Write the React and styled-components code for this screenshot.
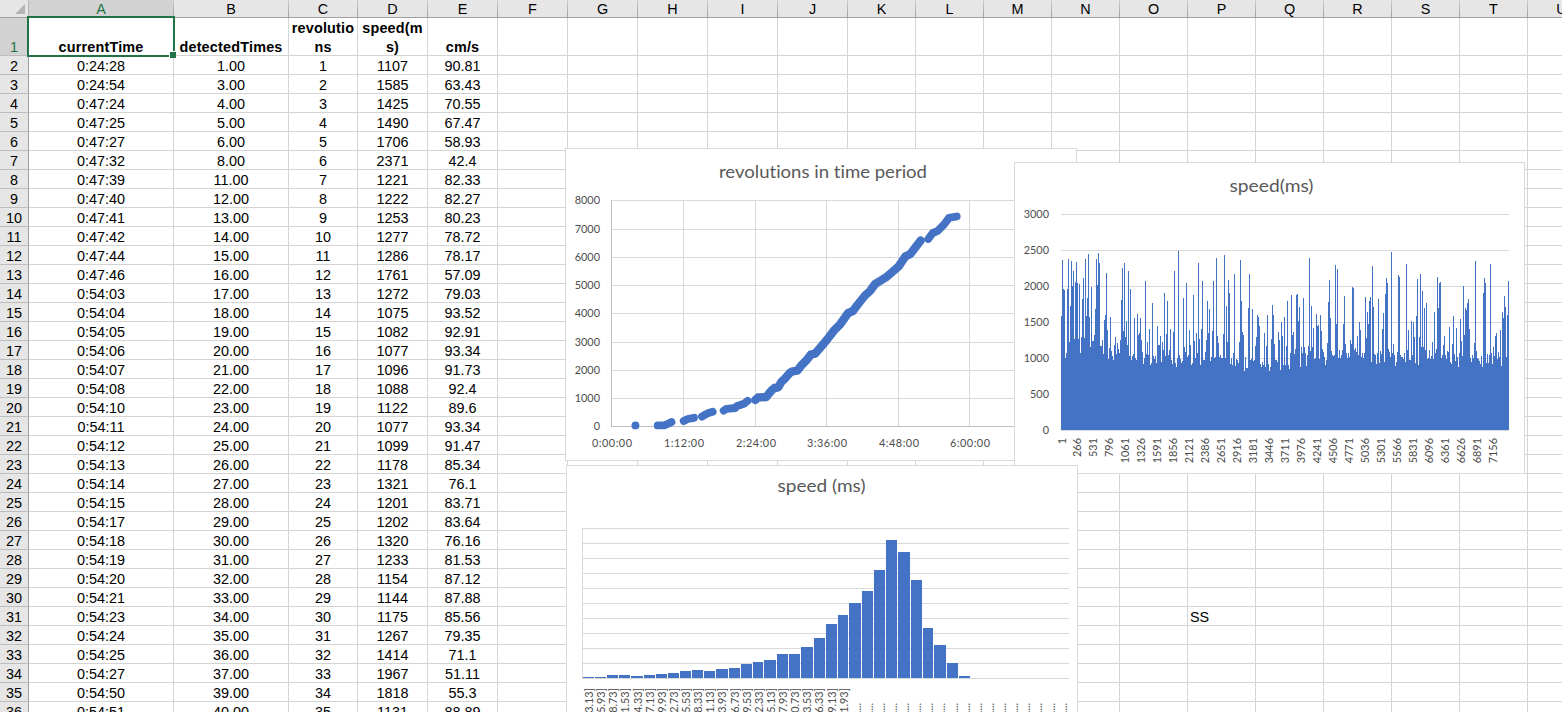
import React from "react";
import styled, { createGlobalStyle } from "styled-components";

const GlobalStyle = createGlobalStyle`
  html, body { margin: 0; padding: 0; overflow: hidden; background: #fff; }
  * { box-sizing: border-box; }
`;

const BLUE = "#4472c4";
const GRID = "#d4d4d4";
const CHART_GRID = "#d9d9d9";
const GREEN = "#217346";

const Sheet = styled.main`
  position: relative;
  width: 1562px;
  height: 712px;
  overflow: hidden;
  background: #fff;
  color: #000;
  font-family: "Liberation Sans", Arial, sans-serif;
  font-size: 14.4px;
`;

const Row = styled.div`
  display: flex;
  width: max-content;
  height: ${(p) => p.$height}px;
`;

const Corner = styled.div`
  display: flex;
  flex: none;
  align-items: flex-end;
  justify-content: flex-end;
  width: 29px;
  padding: 0 3px 3px 0;
  background: #e6e6e6;
  border-right: 1px solid #b4b4b4;
  border-bottom: 1px solid #9f9f9f;
`;

const ColumnHeader = styled.div`
  flex: none;
  width: ${(p) => p.$width}px;
  padding-top: 1px;
  line-height: 17px;
  text-align: center;
  color: ${(p) => (p.$active ? GREEN : "#000")};
  background: ${(p) => (p.$active ? "#d2d2d2" : "#e6e6e6")};
  border-right: 1px solid;
  border-image: linear-gradient(#cfcfcf, #9a9a9a) 1;
  box-shadow: inset 0 -1px #9f9f9f;
`;

const RowHeader = styled.div`
  display: flex;
  flex: none;
  align-items: flex-end;
  justify-content: center;
  width: 29px;
  line-height: 15px;
  color: ${(p) => (p.$active ? GREEN : "#000")};
  background: ${(p) => (p.$active ? "#d2d2d2" : "#e6e6e6")};
  border-right: 1px solid #9f9f9f;
  border-bottom: 1px solid #bdbdbd;
`;

const Cell = styled.div`
  display: flex;
  flex: none;
  align-items: flex-end;
  justify-content: ${(p) => (p.$left ? "flex-start" : "center")};
  width: ${(p) => p.$width}px;
  padding-left: ${(p) => (p.$left ? 2 : 0)}px;
  border-right: 1px solid ${GRID};
  border-bottom: 1px solid ${GRID};
`;

const CellText = styled.span`
  margin-bottom: ${(p) => (p.$bold ? -2 : 0)}px;
  text-align: center;
  white-space: pre;
  font-weight: ${(p) => (p.$bold ? 700 : 400)};
  letter-spacing: ${(p) => (p.$bold ? 0.2 : 0)}px;
  line-height: ${(p) => (p.$bold ? 19 : 15)}px;
`;

const Selection = styled.div`
  position: absolute;
  left: 27px;
  top: 16px;
  width: 148px;
  height: 41px;
  border: 2px solid ${GREEN};

  &::after {
    content: "";
    position: absolute;
    right: -3px;
    bottom: -3px;
    width: 6px;
    height: 6px;
    background: ${GREEN};
    border: 1px solid #fff;
    border-right: 0;
    border-bottom: 0;
  }
`;

const ChartWindow = styled.section`
  position: absolute;
  left: ${(p) => p.$x}px;
  top: ${(p) => p.$y}px;
  width: ${(p) => p.$w}px;
  height: ${(p) => p.$h}px;
  overflow: hidden;
  background: #fff;
  border: 1px solid ${CHART_GRID};
`;

const ChartSvg = styled.svg`
  display: block;
  font-family: Lato, Carlito, sans-serif;
  font-variant-ligatures: none;
  fill: #595959;
`;

const ChartTitle = styled.text`
  font-size: 18px;
  text-anchor: middle;
`;

const AxisLabel = styled.text`
  font-size: 10.9px;
  fill: #4c4c4c;
  text-anchor: ${(p) => p.$anchor || "end"};
`;

const COLUMNS = [
  ["A", 145], ["B", 115], ["C", 69], ["D", 70], ["E", 70], ["F", 70], ["G", 70],
  ["H", 70], ["I", 70], ["J", 70], ["K", 68], ["L", 68], ["M", 68], ["N", 68],
  ["O", 68], ["P", 68], ["Q", 68], ["R", 68], ["S", 68], ["T", 68], ["U", 68],
];

const HEADINGS = ["currentTime", "detectedTimes", "revolutio\nns", "speed(m\ns)", "cm/s"];

const RECORDS = `0:24:28 1.00 1107 90.81
0:24:54 3.00 1585 63.43
0:47:24 4.00 1425 70.55
0:47:25 5.00 1490 67.47
0:47:27 6.00 1706 58.93
0:47:32 8.00 2371 42.4
0:47:39 11.00 1221 82.33
0:47:40 12.00 1222 82.27
0:47:41 13.00 1253 80.23
0:47:42 14.00 1277 78.72
0:47:44 15.00 1286 78.17
0:47:46 16.00 1761 57.09
0:54:03 17.00 1272 79.03
0:54:04 18.00 1075 93.52
0:54:05 19.00 1082 92.91
0:54:06 20.00 1077 93.34
0:54:07 21.00 1096 91.73
0:54:08 22.00 1088 92.4
0:54:10 23.00 1122 89.6
0:54:11 24.00 1077 93.34
0:54:12 25.00 1099 91.47
0:54:13 26.00 1178 85.34
0:54:14 27.00 1321 76.1
0:54:15 28.00 1201 83.71
0:54:17 29.00 1202 83.64
0:54:18 30.00 1320 76.16
0:54:19 31.00 1233 81.53
0:54:20 32.00 1154 87.12
0:54:21 33.00 1144 87.88
0:54:23 34.00 1175 85.56
0:54:24 35.00 1267 79.35
0:54:25 36.00 1414 71.1
0:54:27 37.00 1967 51.11
0:54:50 39.00 1818 55.3
0:54:51 40.00 1131 88.89`
  .split("\n")
  .map((line, i) => {
    const [time, detected, speed, cms] = line.split(" ");
    return [time, detected, String(i + 1), speed, cms];
  });

// Runs of markers in the scatter chart, in sheet coordinates.
const SCATTER_RUNS = [
  "635.4,425.4 635.5,425.4",
  "657.7,425.4 664.3,425.4 667.5,424 671.5,422",
  "683.7,421 687.7,419 694,417.8",
  "702,416.6 704.5,415 708.5,413 712.7,411.7",
  "723.7,410.7 726.3,408.8 735.3,408 737,406 744,403.7 747.7,400.8",
  "755.3,400 758,397.5 766.3,397 769,393.5 772,390 774.5,388 778.3,387.3 781.3,382 784.7,378.7 790,372.7 792.7,371.3 797.3,370.7 802,364.7 806.7,360 810.7,354.7 815,353.7 820,348 826.7,340 834.7,329.7 840,324.5 848,313.2 852.7,311.2 857,305.5 865,295.5 870,291 875.3,283.8 880,281 886,277.3 898.7,266.3 905.3,256.5 910.3,254 920.7,240.5",
  "928.3,239 932.7,233 937.3,231.2 944,224.5 949,217.8 956.7,216.5",
];

// Depth of every column's top below the sheet's y = 240, in thirds of a pixel.
const SPEED_TOPS = [
  228,60,147,150,354,339,147,57,306,198,63,138,93,297,126,66,129,297,132,339,291,177,114,294,57,228,174,42,231,321,
  141,303,303,285,207,57,135,39,69,318,318,300,342,240,225,99,270,357,324,231,333,348,360,315,291,342,309,327,339,300,
  180,84,273,69,291,243,315,93,348,147,360,348,342,234,354,360,222,285,279,234,300,336,372,354,123,342,306,345,267,375,
  369,189,348,357,348,369,258,315,315,288,366,306,330,159,348,282,183,345,330,267,360,372,276,93,369,381,354,33,345,357,
  369,363,174,321,336,129,351,345,270,315,375,369,165,303,354,279,339,69,297,375,267,123,360,360,336,300,183,279,207,
  363,351,273,123,354,351,54,288,309,351,345,354,354,282,45,354,198,306,120,159,372,354,375,339,102,378,357,360,369,306,
  60,183,276,285,393,351,384,384,204,102,360,357,207,363,360,318,291,225,231,258,372,381,366,375,279,381,318,225,372,393,
  381,297,195,225,312,360,360,366,276,300,390,246,288,375,231,375,318,183,375,387,339,165,285,276,342,327,165,162,243,201,
  381,321,339,174,321,339,378,345,318,54,333,198,321,264,357,354,222,258,255,357,225,273,327,336,351,375,360,309,186,120,
  234,333,345,348,345,75,252,87,354,330,354,345,330,252,168,312,339,354,339,351,300,312,141,144,330,324,336,288,345,246,
  270,351,339,354,339,171,294,216,252,183,171,366,78,201,342,345,372,339,177,369,333,342,267,219,366,162,114,129,327,336,
  351,36,339,312,345,378,366,336,105,111,345,351,351,357,339,366,72,330,270,360,360,243,345,246,291,369,228,117,375,291,
  102,321,153,321,204,330,189,357,354,330,357,348,306,357,216,339,327,111,204,129,126,354,345,315,288,345,357,333,336,261,
  366,372,312,228,342,363,264,351,381,339,237,303,348,138,285,204,210,189,177,267,354,366,345,354,309,63,333,354,357,363,
  372,348,381,159,114,129,369,342,369,345,72,339,372,321,348,288,279,357,336,351,270,378,216,234,168,201,351,225,123,
];

// [left, width, height] of each histogram bin.
const BINS = [
  [583,11,1],[595,11,1],[607,11,3],[619,11,3],[631,12,2],[644,11,3],[656,11,4],[668,11,5],
  [680,11,7],[692,11,8],[704,11,7],[716,12,9],[729,11,10],[741,11,14],[753,10,16],[764,12,18],
  [777,11,24],[789,11,24],[801,12,31],[814,11,40],[826,11,54],[838,10,63],[849,12,75],[862,11,87],
  [874,11,108],[886,11,138],[898,12,126],[911,11,98],[923,10,50],[934,12,33],[947,11,15],[959,11,2],
];

const BIN_LABELS = [
  "3.13]", "5.93]", "8.73]", "1.53]", "4.33]", "7.13]", "9.93]", "2.73]", "5.53]", "8.33]", "1.13]",
  "3.93]", "6.73]", "9.53]", "2.33]", "5.13]", "7.93]", "0.73]", "3.53]", "6.33]", "9.13]", "1.93]",
];

const range = (n) => Array.from({ length: n }, (_, i) => i);

// A floating chart whose drawing uses the coordinates of the sheet.
function Chart({ x, y, w, h, children }) {
  return (
    <ChartWindow $x={x} $y={y} $w={w} $h={h}>
      <ChartSvg width={w - 2} height={h - 2} viewBox={`${x + 1} ${y + 1} ${w - 2} ${h - 2}`}>
        {children}
      </ChartSvg>
    </ChartWindow>
  );
}

function HLines({ ys, x1, x2, color = CHART_GRID }) {
  return ys.map((y) => <rect key={y} x={x1} y={y} width={x2 - x1} height="1" fill={color} />);
}

function RevolutionsChart() {
  const ys = [200, 229, 257, 285, 313, 342, 370, 398];
  const xs = [611, 683, 755, 826, 898, 969];
  const times = ["0:00:00", "1:12:00", "2:24:00", "3:36:00", "4:48:00", "6:00:00"];
  return (
    <Chart x={565} y={148} w={512} h={313}>
      <ChartTitle x="823" y="178" textLength="208" lengthAdjust="spacingAndGlyphs">revolutions in time period</ChartTitle>
      <HLines ys={ys} x1={611} x2={1041} />
      {xs.slice(1).map((x) => <rect key={x} x={x} y="200" width="1" height="226" fill={CHART_GRID} />)}
      <rect x="611" y="200" width="1" height="227" fill="#bfbfbf" />
      <HLines ys={[426]} x1={611} x2={1041} color="#bfbfbf" />
      {[...ys, 426].map((y, i) => (
        <AxisLabel key={y} x="600" y={y + 4}>{8000 - i * 1000}</AxisLabel>
      ))}
      {times.map((t, i) => (
        <AxisLabel key={t} $anchor="middle" x={xs[i] + 1} y="447" textLength="40">{t}</AxisLabel>
      ))}
      {SCATTER_RUNS.map((points, i) => (
        <polyline key={points} points={points} fill="none" stroke={BLUE} strokeWidth={i === 5 ? 8.4 : 7.8}
          strokeLinecap="round" strokeLinejoin="round" />
      ))}
    </Chart>
  );
}

function SpeedChart() {
  const ys = range(7).map((i) => 214 + i * 36);
  const columns = SPEED_TOPS.map((t, i) => `M${1061 + i} 430V${240 + t / 3}h1V430z`).join("");
  return (
    <Chart x={1014} y={162} w={511} h={312}>
      <ChartTitle x="1271.5" y="192" textLength="84" lengthAdjust="spacingAndGlyphs">speed(ms)</ChartTitle>
      <HLines ys={ys} x1={1061} x2={1509} />
      <path d={columns} fill={BLUE} shapeRendering="crispEdges" />
      {ys.map((y, i) => (
        <AxisLabel key={y} x="1049" y={y + 4}>{3000 - i * 500}</AxisLabel>
      ))}
      {range(28).map((i) => (
        <AxisLabel key={i} transform={`translate(${1065.5 + i * 15.97} 438) rotate(-90)`}>{1 + i * 265}</AxisLabel>
      ))}
    </Chart>
  );
}

function HistogramChart() {
  return (
    <Chart x={566} y={465} w={512} h={270}>
      <ChartTitle x="821.5" y="492" textLength="88" lengthAdjust="spacingAndGlyphs">speed (ms)</ChartTitle>
      <HLines ys={range(11).map((i) => 528 + i * 15)} x1={582} x2={1069} />
      <rect x="582" y="528" width="1" height="150" fill={CHART_GRID} />
      {BINS.map(([x, w, h]) => <rect key={x} x={x} y={678 - h} width={w} height={h} fill={BLUE} />)}
      {BIN_LABELS.map((label, i) => (
        <AxisLabel key={i} transform={`translate(${593 + i * 12.13} 688) rotate(-90)`}>{label}</AxisLabel>
      ))}
      {range(18).map((i) => (
        <AxisLabel key={i} transform={`translate(${860.5 + i * 12.13} 703) rotate(-90)`}>......</AxisLabel>
      ))}
    </Chart>
  );
}

function SheetRow({ number, values, bold }) {
  return (
    <Row $height={bold ? 38 : 19}>
      <RowHeader $active={number === 1}>{number}</RowHeader>
      {COLUMNS.map(([name, width], i) => {
        const stray = number === 31 && name === "P";
        const content = stray ? "SS" : values[i];
        return (
          <Cell key={name} $width={width} $left={stray}>
            {content && <CellText $bold={bold}>{content}</CellText>}
          </Cell>
        );
      })}
    </Row>
  );
}

export default function App() {
  return (
    <Sheet>
      <GlobalStyle />
      <Row $height={18}>
        <Corner>
          <svg width="10" height="10"><path d="M10 0V10H0z" fill="#b4b4b4" /></svg>
        </Corner>
        {COLUMNS.map(([name, width]) => (
          <ColumnHeader key={name} $width={width} $active={name === "A"}>{name}</ColumnHeader>
        ))}
      </Row>
      <SheetRow number={1} values={HEADINGS} bold />
      {RECORDS.map((values, i) => <SheetRow key={i} number={i + 2} values={values} />)}
      <Selection />
      <RevolutionsChart />
      <SpeedChart />
      <HistogramChart />
    </Sheet>
  );
}
